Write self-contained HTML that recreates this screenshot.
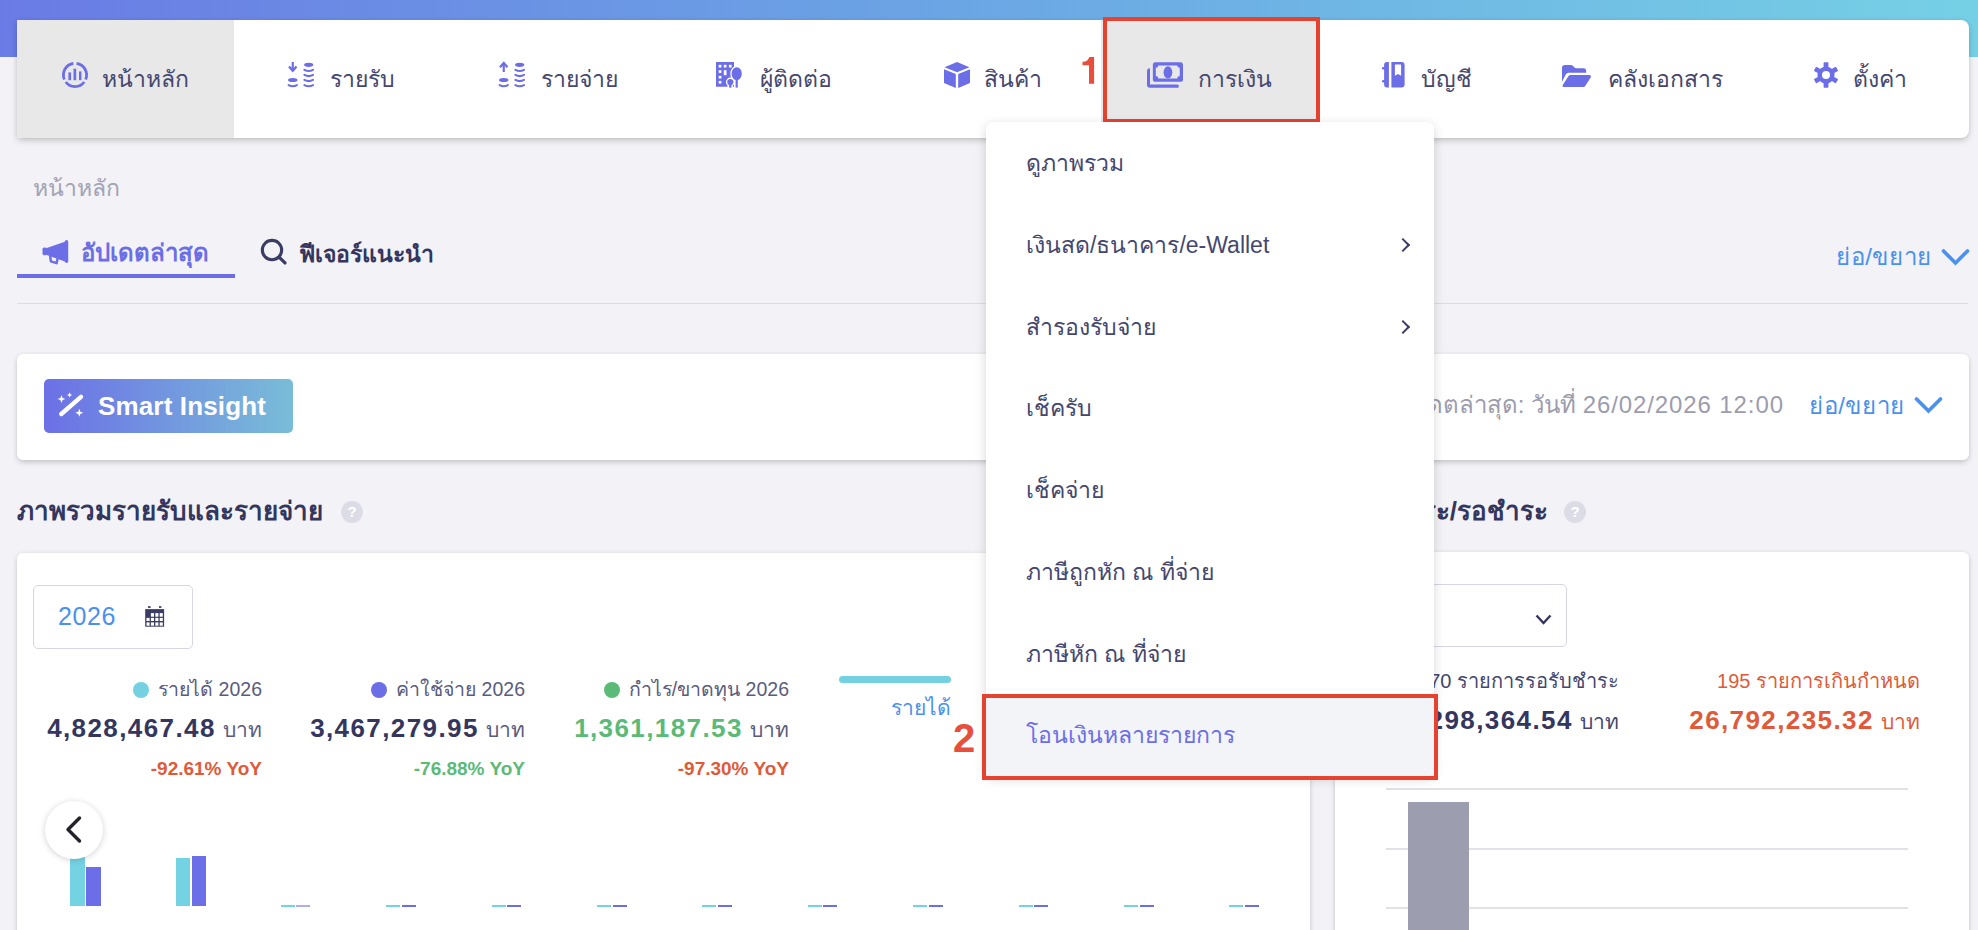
<!DOCTYPE html>
<html><head><meta charset="utf-8">
<style>
*{box-sizing:border-box;margin:0;padding:0}
html,body{width:1978px;height:930px;overflow:hidden}
body{background:#f2f2f7;font-family:"Liberation Sans",sans-serif;color:#45476e;position:relative}
.abs{position:absolute;white-space:nowrap}
#grad{left:0;top:0;width:1978px;height:57px;background:linear-gradient(90deg,#6a7be5 0%,#6ba7e4 50%,#75d0e5 100%)}
#nav{left:17px;top:20px;width:1952px;height:118px;background:#fff;border-radius:0 8px 8px 0;box-shadow:0 3px 7px -1px rgba(0,0,0,.21),0 0 4px rgba(0,0,0,.06);overflow:hidden}
.ni{position:absolute;top:0;height:118px;width:216.8px;font-size:23px;color:#45476e}
.ni span{position:absolute;top:58.5px;transform:translate(-50%,-50%);white-space:nowrap}
.ni.act{background:#e8e8e9}
.red{position:absolute;border:4px solid #e5432f}
.lbl{position:absolute;color:#e84a3c;font-weight:bold;font-size:37px;line-height:1}
.card{position:absolute;background:#fff;border-radius:6px;box-shadow:0 3px 6px -1px rgba(0,0,0,.19),0 0 4px rgba(0,0,0,.07)}
.dd{position:absolute;left:0;width:448px;height:81.75px;padding-left:40px;font-size:23px;line-height:83px;color:#45476e;white-space:nowrap}
.dd i{position:absolute;right:26px;top:36px;width:10px;height:10px;border-right:2.3px solid #3a3c66;border-top:2.3px solid #3a3c66;transform:rotate(45deg)}
.dd.hl{background:#f3f4f7;color:#6c6ee8;border-radius:0 0 7px 7px}
</style></head><body>
<div id="grad" class="abs"></div>
<div id="nav" class="abs">
  <div class="ni act" style="left:0"><svg class="ic" style="left:44.9px;top:41.6px;position:absolute;overflow:visible" width="26" height="26" viewBox="0 0 26 26"><g fill="none" stroke="#6c6ee8" stroke-width="2.8"><path d="M14.61 1.51A11.6 11.6 0 0 1 23.68 17.53"/><path d="M22.26 19.98A11.6 11.6 0 0 1 3.74 19.98"/><path d="M2.32 17.53A11.6 11.6 0 0 1 11.39 1.51"/></g><g fill="#6c6ee8"><rect x="6.4" y="10.4" width="2.7" height="7.8"/><rect x="11.5" y="6.7" width="2.7" height="11.5"/><rect x="17" y="9.4" width="2.4" height="8.8"/></g></svg><span style="left:128.2px">หน้าหลัก</span></div>
  <div class="ni" style="left:216.8px"><svg class="ic" style="left:54.5px;top:42.0px;position:absolute;overflow:visible" width="26" height="26" viewBox="0 0 26 26"><g fill="none" stroke="#6c6ee8"><path d="M4.75 0V8.5" stroke-width="2.2"/><path d="M1 4.6 4.75 8.8 8.5 4.6" stroke-width="2.3" stroke-linejoin="miter"/><path d="M0.6 23.05Q4.75 25.4 8.9 23.05" stroke-width="2.1" stroke-linecap="round"/><path d="M16.4 7.85Q20.7 10.20 25 7.85" stroke-width="2.1" stroke-linecap="round"/><path d="M16.4 12.95Q20.7 15.30 25 12.95" stroke-width="2.1" stroke-linecap="round"/><path d="M16.4 17.95Q20.7 20.30 25 17.95" stroke-width="2.1" stroke-linecap="round"/><path d="M16.4 23.05Q20.7 25.40 25 23.05" stroke-width="2.1" stroke-linecap="round"/></g><g fill="#6c6ee8"><ellipse cx="4.75" cy="18" rx="4.75" ry="2.1"/><ellipse cx="20.7" cy="2.8" rx="4.6" ry="2.1"/></g></svg><span style="left:128.4px">รายรับ</span></div>
  <div class="ni" style="left:433.6px"><svg class="ic" style="left:48.6px;top:42.0px;position:absolute;overflow:visible" width="26" height="26" viewBox="0 0 26 26"><g fill="none" stroke="#6c6ee8"><path d="M4.75 10V1.5" stroke-width="2.2"/><path d="M1 5.2 4.75 1 8.5 5.2" stroke-width="2.3" stroke-linejoin="miter"/><path d="M0.6 23.05Q4.75 25.4 8.9 23.05" stroke-width="2.1" stroke-linecap="round"/><path d="M16.4 7.85Q20.7 10.20 25 7.85" stroke-width="2.1" stroke-linecap="round"/><path d="M16.4 12.95Q20.7 15.30 25 12.95" stroke-width="2.1" stroke-linecap="round"/><path d="M16.4 17.95Q20.7 20.30 25 17.95" stroke-width="2.1" stroke-linecap="round"/><path d="M16.4 23.05Q20.7 25.40 25 23.05" stroke-width="2.1" stroke-linecap="round"/></g><g fill="#6c6ee8"><ellipse cx="4.75" cy="18" rx="4.75" ry="2.1"/><ellipse cx="20.7" cy="2.8" rx="4.6" ry="2.1"/></g></svg><span style="left:128.5px">รายจ่าย</span></div>
  <div class="ni" style="left:650.4px"><svg class="ic" style="left:48.6px;top:42.0px;position:absolute;overflow:visible" width="27" height="26" viewBox="0 0 27 26"><path d="M0 0H18V24.8H0Z" fill="#6c6ee8"/><g fill="#fff"><rect x="2.7" y="2.8" width="2.7" height="2.7"/><rect x="7.8" y="2.8" width="2.7" height="2.7"/><rect x="12.9" y="2.8" width="2.7" height="2.7"/><rect x="2.7" y="8.2" width="2.7" height="2.7"/><rect x="7.8" y="8.2" width="2.7" height="5"/><rect x="2.7" y="13.8" width="2.7" height="2.7"/><rect x="2.7" y="18.9" width="2.7" height="2.7"/></g><g fill="#fff" stroke="#fff" stroke-width="2.6"><ellipse cx="20.7" cy="11.7" rx="5.1" ry="6.5"/><circle cx="14.3" cy="20" r="3.1"/><rect x="12.8" y="21" width="2.7" height="4.6"/></g><g fill="#6c6ee8"><ellipse cx="20.7" cy="11.7" rx="5.1" ry="6.5"/><rect x="19.6" y="16" width="2.2" height="9.6"/><circle cx="14.3" cy="20" r="3.1"/><rect x="13.1" y="21" width="2.4" height="4.6"/></g></svg><span style="left:129.0px">ผู้ติดต่อ</span></div>
  <div class="ni" style="left:867.2px"><svg class="ic" style="left:59.9px;top:42.0px;position:absolute;overflow:visible" width="26" height="26" viewBox="0 0 26 26" fill="#6c6ee8"><path d="M13 0 25.5 5.2 13 10.2 0.5 5.2z"/><path d="M0 7.2 11.8 12v14L0 21z"/><path d="M26 7.2 14.2 12v14L26 21z"/></svg><span style="left:128.5px">สินค้า</span></div>
  <div class="ni act" style="left:1084px"><svg class="ic" style="left:46.0px;top:41.8px;position:absolute;overflow:visible" width="36" height="26" viewBox="0 0 36.3 25.8"><rect x="5.9" y="0" width="30.4" height="19.7" rx="2.6" fill="#6c6ee8"/><path d="M11.4 3.2H30.5A2.5 2.5 0 0 0 33 5.7V13.9A2.5 2.5 0 0 0 30.5 16.4H11.4A2.5 2.5 0 0 0 8.9 13.9V5.7A2.5 2.5 0 0 0 11.4 3.2Z" fill="#e8e8e9"/><ellipse cx="21.1" cy="10.2" rx="4.4" ry="6.2" fill="#6c6ee8"/><path d="M0 9.2A3 3 0 0 1 3 6.2V22.6H30.6A1.6 1.6 0 0 1 30.6 25.8H3A3 3 0 0 1 0 22.8Z" fill="#6c6ee8"/></svg><span style="left:134.2px">การเงิน</span></div>
  <div class="ni" style="left:1300.8px"><svg class="ic" style="left:64.2px;top:42.0px;position:absolute;overflow:visible" width="23" height="26" viewBox="0 0 23 26" fill="#6c6ee8"><path d="M5 0H6.9V25.5H5A3 3 0 0 1 2.1 22.5V3A3 3 0 0 1 5 0Z"/><path d="M9.4 0H19.6A3 3 0 0 1 22.6 3V22.5A3 3 0 0 1 19.6 25.5H9.4Z"/><path d="M12.9 2.5H19.1V13.8L16 11.9 12.9 13.8Z" fill="#fff"/><rect x="0" y="5" width="3.2" height="2.6" rx="1.3"/><rect x="0" y="17.9" width="3.2" height="2.6" rx="1.3"/></svg><span style="left:128.8px">บัญชี</span></div>
  <div class="ni" style="left:1517.6px"><svg class="ic" style="left:27.4px;top:45.0px;position:absolute;overflow:visible" width="29" height="22" viewBox="0 0 29 22" fill="#6c6ee8"><path d="M0 3A3 3 0 0 1 3 0H9A2.5 2.5 0 0 1 10.8 0.8L12.5 2.6A2.5 2.5 0 0 0 14.3 3.3H21.5A2.7 2.7 0 0 1 24.2 6V7.8H6.5A3 3 0 0 0 3.9 9.3L0 16.7Z"/><path d="M6.4 11.3A2.5 2.5 0 0 1 8.6 10H27.4A1.5 1.5 0 0 1 28.8 12.2L23.4 20.8A2.5 2.5 0 0 1 21.3 22H1.7A1.2 1.2 0 0 1 0.6 20.3Z"/></svg><span style="left:130.5px">คลังเอกสาร</span></div>
  <div class="ni" style="left:1734.4px"><svg class="ic" style="left:61.8px;top:41.8px;position:absolute;overflow:visible" width="26" height="26" viewBox="0 0 26 26"><g fill="#6c6ee8"><circle cx="13" cy="13" r="8.6"/><rect x="10.6" y="0.3" width="4.8" height="6" rx="0.8" transform="rotate(0 13 13)"/><rect x="10.6" y="0.3" width="4.8" height="6" rx="0.8" transform="rotate(60 13 13)"/><rect x="10.6" y="0.3" width="4.8" height="6" rx="0.8" transform="rotate(120 13 13)"/><rect x="10.6" y="0.3" width="4.8" height="6" rx="0.8" transform="rotate(180 13 13)"/><rect x="10.6" y="0.3" width="4.8" height="6" rx="0.8" transform="rotate(240 13 13)"/><rect x="10.6" y="0.3" width="4.8" height="6" rx="0.8" transform="rotate(300 13 13)"/></g><circle cx="13" cy="13" r="4" fill="#fff"/></svg><span style="left:128.9px">ตั้งค่า</span></div>
</div>
<div class="red" style="left:1103px;top:17px;width:217px;height:106px"></div>
<svg class="abs" style="left:1082px;top:57px" width="13" height="27" viewBox="0 0 13 27"><path d="M7.3 0H12.1V26.8H7V8.3H0.5V4.8Q3.8 4.7 5.4 3.2Q6.6 1.9 7.3 0Z" fill="#e84e3c"/></svg>

<!-- breadcrumb & tabs -->
<div class="abs" style="left:33px;top:174px;font-size:23px;line-height:28px;color:#a3a3b3">หน้าหลัก</div>
<div class="abs" style="left:17px;top:274px;width:218px;height:4px;background:#6c6ee8"></div>
<div class="abs" style="left:17px;top:303px;width:1951px;height:1px;background:#dcdce4"></div>
<svg class="abs" style="left:42px;top:240px" width="27" height="25" viewBox="0 0 27 25"><g fill="#6c6ee8"><rect x="0.5" y="7.6" width="4.4" height="7.6" rx="1.6"/><path d="M4 8.3 23.6 1.5V21.7L4 14.8Z"/><rect x="22.9" y="0" width="3.3" height="22.9" rx="1.65"/></g><path d="M8.2 16.2 8.9 21.4 14.6 23.1 15.6 18.6" fill="none" stroke="#6c6ee8" stroke-width="2.5" stroke-linejoin="round" stroke-linecap="round"/></svg>
<div class="abs" style="left:81px;top:239px;font-size:24px;line-height:28px;font-weight:bold;color:#6c6ee8">อัปเดตล่าสุด</div>
<svg class="abs" style="left:260px;top:238px" width="28" height="28" viewBox="0 0 28 28"><circle cx="12" cy="12.1" r="9.7" fill="none" stroke="#3a3c63" stroke-width="3.1"/><path d="M19 19.1 25 24.9" stroke="#3a3c63" stroke-width="3.3" stroke-linecap="round"/></svg>
<div class="abs" style="left:299px;top:240px;font-size:23px;line-height:28px;font-weight:bold;color:#34365e">ฟีเจอร์แนะนำ</div>
<div class="abs" style="left:1836px;top:243px;font-size:24px;line-height:28px;color:#4a91ee;letter-spacing:0.6px">ย่อ/ขยาย</div>
<svg class="abs" style="left:1941px;top:248px" width="29" height="19" viewBox="0 0 29 19"><path d="M2.5 3 14.5 15 26.5 3" fill="none" stroke="#4a91ee" stroke-width="3.6" stroke-linecap="round"/></svg>

<!-- smart insight card -->
<div class="card" style="left:17px;top:354px;width:1952px;height:106px"></div>
<div class="abs" style="left:44px;top:379px;width:249px;height:54px;border-radius:5px;background:linear-gradient(90deg,#6c70e6,#79bdd8)"></div>
<svg class="abs" style="left:57px;top:392px" width="28" height="27" viewBox="0 0 28 27"><path d="M4.3 22 24 4.8" stroke="#fff" stroke-width="4.4" stroke-linecap="round"/><g fill="#fff"><path d="M4.5 3 5.6 5.9 8.5 7 5.6 8.1 4.5 11 3.4 8.1 0.5 7 3.4 5.9Z"/><path d="M12.6 0.3 13.4 2.2 15.3 3 13.4 3.8 12.6 5.7 11.8 3.8 9.9 3 11.8 2.2Z"/><path d="M22.3 16.8 23.4 19.7 26.3 20.8 23.4 21.9 22.3 24.8 21.2 21.9 18.3 20.8 21.2 19.7Z"/></g></svg>
<div class="abs" style="left:98px;top:391px;font-size:26px;line-height:30px;font-weight:bold;color:#fff;letter-spacing:0.15px">Smart Insight</div>
<div class="abs" style="right:195px;top:391px;font-size:24px;line-height:28px;color:#9c9cae">อัปเดตล่าสุด: วันที่ <span style="letter-spacing:0.9px">26/02/2026 12:0</span>0</div>
<div class="abs" style="left:1809px;top:392px;font-size:24px;line-height:28px;color:#4a91ee;letter-spacing:0.6px">ย่อ/ขยาย</div>
<svg class="abs" style="left:1914px;top:396px" width="29" height="18" viewBox="0 0 29 18"><path d="M2.5 3 14.5 15 26.5 3" fill="none" stroke="#4a91ee" stroke-width="3.6" stroke-linecap="round"/></svg>

<!-- section titles -->
<div class="abs" style="left:17px;top:496px;font-size:26px;line-height:30px;font-weight:bold;color:#34365e">ภาพรวมรายรับและรายจ่าย</div>
<div class="abs" style="left:341px;top:501px;width:22px;height:22px;border-radius:50%;background:#dcdce6;color:#fff;font-size:15px;font-weight:bold;line-height:22px;text-align:center">?</div>
<div class="abs" style="right:430px;top:496px;font-size:26px;line-height:30px;font-weight:bold;color:#34365e">ค้างรับชำระ/รอชำระ</div>
<div class="abs" style="left:1564px;top:501px;width:22px;height:22px;border-radius:50%;background:#dcdce6;color:#fff;font-size:15px;font-weight:bold;line-height:22px;text-align:center">?</div>

<!-- left chart card -->
<div class="card" style="left:17px;top:553px;width:1293px;height:400px"></div>
<div class="abs" style="left:33px;top:585px;width:160px;height:64px;border:1px solid #d6d6e6;border-radius:5px;background:#fff"></div>
<div class="abs" style="left:58px;top:602px;font-size:25px;letter-spacing:0.6px;line-height:28px;color:#4a91ee">2026</div>
<svg class="abs" style="left:145px;top:606px" width="20" height="21" viewBox="0 0 20 21"><g fill="#3a3c66"><rect x="3" y="0.2" width="2.6" height="1.7"/><rect x="14" y="0.2" width="2.4" height="1.7"/><rect x="0.2" y="3.1" width="18.9" height="17.6"/></g><g fill="#fff"><rect x="5.9" y="7.1" width="3.1" height="3.6"/><rect x="10.3" y="7.1" width="3.1" height="3.6"/><rect x="14.7" y="7.1" width="3.1" height="3.6"/><rect x="1.5" y="11.9" width="3.1" height="3.1"/><rect x="5.9" y="11.9" width="3.1" height="3.1"/><rect x="10.3" y="11.9" width="3.1" height="3.1"/><rect x="14.7" y="11.9" width="3.1" height="3.1"/><rect x="1.5" y="16.4" width="3.1" height="3.3"/><rect x="5.9" y="16.4" width="3.1" height="3.3"/><rect x="10.3" y="16.4" width="3.1" height="3.3"/><rect x="14.7" y="16.4" width="3.1" height="3.3"/></g></svg>

<!-- legends -->
<div class="abs" style="right:1716px;top:675px;font-size:19.5px;line-height:28px;color:#5a5c7e;text-align:right"><span style="display:inline-block;width:16px;height:16px;border-radius:50%;background:#73d1e1;margin-right:9px;vertical-align:-2px"></span>รายได้ 2026</div>
<div class="abs" style="right:1716px;top:712px;font-size:26px;line-height:32px;color:#34365e;text-align:right"><b style="letter-spacing:1.4px">4,828,467.48</b> <span style="font-size:21px;color:#5a5c7e">บาท</span></div>
<div class="abs" style="right:1716px;top:758px;font-size:19px;line-height:22px;color:#e05a3a;font-weight:bold;text-align:right">-92.61% YoY</div>

<div class="abs" style="right:1453px;top:675px;font-size:19.5px;line-height:28px;color:#5a5c7e;text-align:right"><span style="display:inline-block;width:16px;height:16px;border-radius:50%;background:#6c6ee8;margin-right:9px;vertical-align:-2px"></span>ค่าใช้จ่าย 2026</div>
<div class="abs" style="right:1453px;top:712px;font-size:26px;line-height:32px;color:#34365e;text-align:right"><b style="letter-spacing:1.4px">3,467,279.95</b> <span style="font-size:21px;color:#5a5c7e">บาท</span></div>
<div class="abs" style="right:1453px;top:758px;font-size:19px;line-height:22px;color:#5cba78;font-weight:bold;text-align:right">-76.88% YoY</div>

<div class="abs" style="right:1189px;top:675px;font-size:19.5px;line-height:28px;color:#5a5c7e;text-align:right"><span style="display:inline-block;width:16px;height:16px;border-radius:50%;background:#5cba78;margin-right:9px;vertical-align:-2px"></span>กำไร/ขาดทุน 2026</div>
<div class="abs" style="right:1189px;top:712px;font-size:26px;line-height:32px;color:#5cba78;text-align:right"><b style="letter-spacing:1.4px">1,361,187.53</b> <span style="font-size:21px;color:#5a5c7e">บาท</span></div>
<div class="abs" style="right:1189px;top:758px;font-size:19px;line-height:22px;color:#e05a3a;font-weight:bold;text-align:right">-97.30% YoY</div>

<div class="abs" style="left:839px;top:676px;width:112px;height:7px;border-radius:4px;background:#73d1e1"></div>
<div class="abs" style="right:1027px;top:695px;font-size:21px;line-height:26px;color:#4a91ee">รายได้</div>

<!-- bars -->
<div class="abs" style="left:70px;top:857px;width:15px;height:49px;background:#74d3e3"></div>
<div class="abs" style="left:86px;top:867px;width:15px;height:39px;background:#6c6ee8"></div>
<div class="abs" style="left:176px;top:858px;width:14px;height:48px;background:#74d3e3"></div>
<div class="abs" style="left:191.5px;top:856px;width:14px;height:50px;background:#6c6ee8"></div>
<div class="abs" style="left:280.8px;top:905px;width:14px;height:2px;background:#74d3e3"></div><div class="abs" style="left:296.3px;top:905px;width:14px;height:2px;background:#aeacf2"></div>
<div class="abs" style="left:386.2px;top:905px;width:14px;height:2px;background:#74d3e3"></div><div class="abs" style="left:401.7px;top:905px;width:14px;height:2px;background:#6c6ee8"></div>
<div class="abs" style="left:491.6px;top:905px;width:14px;height:2px;background:#74d3e3"></div><div class="abs" style="left:507.1px;top:905px;width:14px;height:2px;background:#6c6ee8"></div>
<div class="abs" style="left:597.0px;top:905px;width:14px;height:2px;background:#74d3e3"></div><div class="abs" style="left:612.5px;top:905px;width:14px;height:2px;background:#6c6ee8"></div>
<div class="abs" style="left:702.4px;top:905px;width:14px;height:2px;background:#74d3e3"></div><div class="abs" style="left:717.9px;top:905px;width:14px;height:2px;background:#6c6ee8"></div>
<div class="abs" style="left:807.8px;top:905px;width:14px;height:2px;background:#74d3e3"></div><div class="abs" style="left:823.3px;top:905px;width:14px;height:2px;background:#6c6ee8"></div>
<div class="abs" style="left:913.2px;top:905px;width:14px;height:2px;background:#74d3e3"></div><div class="abs" style="left:928.7px;top:905px;width:14px;height:2px;background:#6c6ee8"></div>
<div class="abs" style="left:1018.6px;top:905px;width:14px;height:2px;background:#74d3e3"></div><div class="abs" style="left:1034.1px;top:905px;width:14px;height:2px;background:#6c6ee8"></div>
<div class="abs" style="left:1124.0px;top:905px;width:14px;height:2px;background:#74d3e3"></div><div class="abs" style="left:1139.5px;top:905px;width:14px;height:2px;background:#6c6ee8"></div>
<div class="abs" style="left:1229.4px;top:905px;width:14px;height:2px;background:#74d3e3"></div><div class="abs" style="left:1244.9px;top:905px;width:14px;height:2px;background:#6c6ee8"></div>

<div class="abs" style="left:45px;top:801px;width:58px;height:58px;border-radius:50%;background:#fff;box-shadow:0 1px 6px rgba(0,0,0,.18)"></div>
<svg class="abs" style="left:64px;top:815px" width="20" height="29" viewBox="0 0 20 29"><path d="M15.5 3 4 14.5 15.5 26" fill="none" stroke="#23232b" stroke-width="3.4" stroke-linecap="round" stroke-linejoin="round"/></svg>

<!-- right card -->
<div class="card" style="left:1335px;top:552px;height:400px;width:634px"></div>
<div class="abs" style="left:1380px;top:584px;width:187px;height:63px;border:1px solid #d6d6e6;border-radius:5px;background:#fff"></div>
<svg class="abs" style="left:1535px;top:614px" width="17" height="12" viewBox="0 0 17 12"><path d="M1.5 1.5 8.5 9 15.5 1.5" fill="none" stroke="#34365e" stroke-width="2.4"/></svg>
<div class="abs" style="right:359px;top:667px;font-size:20px;line-height:28px;color:#45476e">170 รายการรอรับชำระ</div>
<div class="abs" style="right:359px;top:704px;font-size:26px;line-height:32px;color:#34365e"><b style="letter-spacing:1.4px">1,298,364.54</b> <span style="font-size:21px;color:#45476e">บาท</span></div>
<div class="abs" style="right:58px;top:667px;font-size:20px;line-height:28px;color:#e05a3a">195 รายการเกินกำหนด</div>
<div class="abs" style="right:58px;top:704px;font-size:26px;line-height:32px;color:#e05a3a"><b style="letter-spacing:1.4px">26,792,235.32</b> <span style="font-size:21px">บาท</span></div>
<div class="abs" style="left:1386px;top:788px;width:522px;height:2px;background:#e2e2e6"></div>
<div class="abs" style="left:1386px;top:848px;width:522px;height:2px;background:#e2e2e6"></div>
<div class="abs" style="left:1386px;top:907px;width:522px;height:2px;background:#e2e2e6"></div>
<div class="abs" style="left:1408px;top:802px;width:61px;height:130px;background:#9c9eb0"></div>

<!-- dropdown -->
<div class="abs" style="left:986px;top:122px;width:448px;height:654px;background:#fff;border-radius:7px;box-shadow:0 3px 12px rgba(0,0,0,.16)">
 <div class="dd" style="top:0">ดูภาพรวม</div>
 <div class="dd" style="top:81.75px">เงินสด/ธนาคาร/e-Wallet<i></i></div>
 <div class="dd" style="top:163.5px">สำรองรับจ่าย<i></i></div>
 <div class="dd" style="top:245.25px">เช็ครับ</div>
 <div class="dd" style="top:327px">เช็คจ่าย</div>
 <div class="dd" style="top:408.75px">ภาษีถูกหัก ณ ที่จ่าย</div>
 <div class="dd" style="top:490.5px">ภาษีหัก ณ ที่จ่าย</div>
 <div class="dd hl" style="top:572.25px">โอนเงินหลายรายการ</div>
</div>
<div class="red" style="left:982px;top:694px;width:456px;height:86px"></div>
<div class="lbl" style="left:953px;top:718px;font-size:40px;color:#e84e3c">2</div>
</body></html>
